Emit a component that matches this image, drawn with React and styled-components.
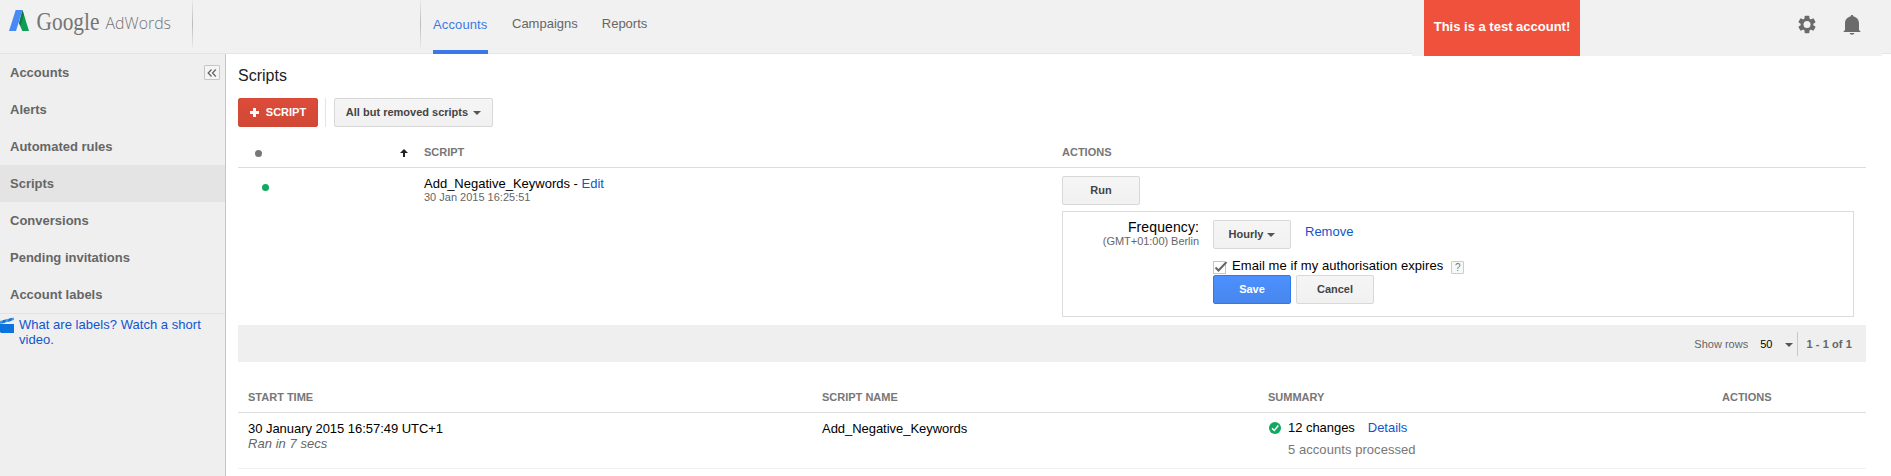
import React from 'react';
import styled, { createGlobalStyle, css } from 'styled-components';

const Global = createGlobalStyle`
  * { box-sizing: border-box; }
  html, body { margin: 0; height: 100%; overflow: hidden; }
  body { font: 13px/15px "Liberation Sans", Arial, sans-serif; color: #000; background: #fff; }
  svg { display: block; flex: none; }
`;

const Page = styled.div`
  display: flex;
  flex-direction: column;
  height: 476px;
  width: 1891px;
`;

const Header = styled.header`
  position: relative;
  display: flex;
  height: 54px;
  flex: none;
  background: #f1f1f1;
  border-bottom: 1px solid #e5e5e5;
`;

const Brand = styled.div`
  width: 192px;
  height: 53px;
`;

const HeaderRule = styled.div`
  width: 1px;
  height: 48px;
  background: linear-gradient(#eaeaea, #bbb 50%, #eaeaea);
`;

const Spacer = styled.div`
  width: ${p => p.$w}px;
  flex: none;
`;

const Tabs = styled.nav`
  display: flex;
  gap: 24px;
  margin-left: 12px;
`;

const Tab = styled.a`
  height: 54px;
  padding-top: 16px;
  color: #666;
  ${p => p.$active && css`
    width: 55px;
    padding-top: 17px;
    letter-spacing: 0.12px;
    color: #3b78e7;
    border-bottom: 4px solid #3b78e7;
  `}
`;

const AccountBar = styled.div`
  position: absolute;
  top: 0;
  right: 9px;
  width: 470px;
  height: 56px;
  display: flex;
  padding-left: 12px;
  background: #f1f1f1;
`;

const TestBadge = styled.div`
  width: 156px;
  height: 56px;
  padding-top: 19px;
  text-align: center;
  white-space: nowrap;
  font-weight: bold;
  color: #fff;
  background: #f0513c;
`;

const IconGroup = styled.div`
  display: flex;
  gap: 19px;
  padding: 12px 0 0 213.5px;
`;

const Body = styled.div`
  display: flex;
  flex: 1;
  min-height: 0;
`;

const Sidebar = styled.aside`
  width: 226px;
  flex: none;
  background: #efefef;
  border-right: 1px solid #c6c6c6;
`;

const NavItem = styled.div`
  display: flex;
  align-items: center;
  justify-content: space-between;
  height: 37px;
  padding: 0 5px 0 10px;
  font-weight: bold;
  color: #666;
  background: ${p => (p.$active ? '#e4e4e4' : 'transparent')};
`;

const Collapse = styled.button`
  display: flex;
  align-items: center;
  justify-content: center;
  width: 16px;
  height: 15px;
  padding: 0;
  border: 1px solid #c6c6c6;
  border-radius: 1px;
  background: #f5f5f5;
`;

const VideoHint = styled.div`
  display: flex;
  gap: 5px;
  padding: 3px 12px 0 0;
  border-top: 1px solid #e3e3e3;
  letter-spacing: 0.03px;
`;

const Link = styled.a`
  color: #15c;
`;

const Main = styled.main`
  flex: 1;
  padding: 13px 25px 0 12px;
`;

const Title = styled.h1`
  margin: 0;
  font-size: 16px;
  line-height: 18px;
  font-weight: normal;
  color: #222;
`;

const Toolbar = styled.div`
  display: flex;
  margin-top: 13px;
`;

const Divider = styled.div`
  width: 1px;
  margin: 0 8px 0 7px;
  background: #e5e5e5;
`;

const Button = styled.button`
  display: flex;
  align-items: center;
  justify-content: center;
  gap: ${p => p.$gap || 0}px;
  width: ${p => p.$w || 78}px;
  height: 29px;
  flex: none;
  padding: 0 0 1px;
  border: 1px solid #d8d8d8;
  border-radius: 2px;
  font: bold 11px/27px "Liberation Sans", Arial, sans-serif;
  color: #444;
  background: linear-gradient(#f5f5f5, #f1f1f1);
  ${p => p.$kind === 'create' && css`
    color: #fff;
    border-color: #d14836;
    background: linear-gradient(#dd4b39, #d14836);
  `}
  ${p => p.$kind === 'primary' && css`
    color: #fff;
    border-color: #3079ed;
    background: linear-gradient(#4d90fe, #4787ed);
  `}
`;

const Caret = styled.span`
  border: 4px solid transparent;
  border-top-color: #555;
  border-bottom: 0;
  margin-top: 2px;
`;

const ColHeads = styled.div`
  display: grid;
  grid-template-columns: ${p => p.$cols};
  height: ${p => p.$h}px;
  padding: ${p => p.$pt}px 0 0;
  border-bottom: 1px solid #ddd;
  font: bold 11px/12px "Liberation Sans", Arial, sans-serif;
  color: #777;
`;

const StatusHead = styled.div`
  display: flex;
  justify-content: space-between;
  padding: 3px 16px 0 17px;
`;

const Dot = styled.i`
  width: 7px;
  height: 7px;
  margin: ${p => p.$m || '0'};
  border-radius: 50%;
  background: ${p => p.$c};
`;

const ScriptRow = styled.div`
  display: grid;
  grid-template-columns: 186px 638px 1fr;
  height: 157px;
`;

const ScriptCell = styled.div`
  padding-top: 8px;
`;

const Stamp = styled.div`
  font-size: 11px;
  line-height: 12px;
  letter-spacing: ${p => p.$ls || 0}px;
  color: #666;
`;

const ActionCell = styled.div`
  padding: 8px 12px 0 0;
`;

const Schedule = styled.div`
  display: flex;
  height: 106px;
  margin-top: 6px;
  padding-top: 8px;
  border: 1px solid #dcdcdc;
`;

const FrequencyLabel = styled.div`
  width: 136px;
  font-size: 14px;
  line-height: 16px;
  letter-spacing: 0.1px;
  text-align: right;
  margin: -1px 14px 0 0;
  white-space: nowrap;
`;

const FreqControls = styled.div`
  display: flex;
  gap: 14px;
`;

const RemoveLink = styled(Link)`
  padding-top: 4px;
`;

const EmailRow = styled.label`
  display: flex;
  margin-top: 9px;
  height: 17px;
  letter-spacing: 0.07px;
  white-space: nowrap;
`;

const CheckBox = styled.span`
  width: 13px;
  height: 13px;
  margin: 3px 6px 0 0;
  border: 1px solid #c6c6c6;
`;

const Help = styled.span`
  width: 13px;
  height: 13px;
  margin: 3px 0 0 8px;
  border: 1px solid #ccc;
  border-radius: 1px;
  background: #f8f8f8;
  font: 10px/12px "Liberation Sans", Arial, sans-serif;
  text-align: center;
  color: #777;
`;

const ButtonPair = styled.div`
  display: flex;
  gap: 5px;
`;

const Pager = styled.div`
  display: flex;
  align-items: center;
  justify-content: flex-end;
  height: 37px;
  padding-right: 14px;
  background: #efefef;
  font-size: 11px;
  line-height: 12px;
  color: #666;
`;

const RowCount = styled.span`
  margin: 0 13px 0 12px;
  color: #000;
`;

const PagerRule = styled.i`
  width: 1px;
  height: 24px;
  margin: 0 8px 0 4px;
  background: #c8c8c8;
`;

const Range = styled.b`
  letter-spacing: 0.1px;
`;

const LogRow = styled.div`
  display: grid;
  grid-template-columns: ${p => p.$cols};
  height: 56px;
  padding-top: 8px;
  border-bottom: 1px solid #f0f0f0;
  letter-spacing: -0.04px;
`;

const LogCell = styled.div`
  padding-left: 10px;
`;

const Duration = styled.div`
  font-style: italic;
  letter-spacing: 0.05px;
  color: #666;
`;

const Summary = styled.div`
  display: flex;
  margin-top: -1px;
  gap: 7px;
`;

const Details = styled(Link)`
  margin-left: 13px;
`;

const Processed = styled.div`
  margin-top: 7px;
  letter-spacing: 0.06px;
  color: #777;
`;

const LOG_COLS = '574px 446px 454px 1fr';
const NAV = ['Accounts', 'Alerts', 'Automated rules', 'Scripts', 'Conversions', 'Pending invitations', 'Account labels'];

const Logo = () => (
  <svg width="192" height="53" viewBox="0 0 192 53">
    <path d="M22.5 10L19 23L22.3 31H29Z" fill="#109d58" />
    <path d="M22.5 10L19 23L20.500 26.500L23.800 14.500Z" fill="#0b8043" />
    <path d="M15.7 10H22.5L16 31H9Z" fill="#4889f6" />
    <text x="36.5" y="30" fontFamily="Liberation Serif, serif" fontSize="24.500" fill="#757575" textLength="63" lengthAdjust="spacingAndGlyphs">Google</text>
    <text x="105.5" y="29" fontFamily="Open Sans, sans-serif" fontWeight="300" fontSize="17" fill="#757575" textLength="65.5" lengthAdjust="spacingAndGlyphs">AdWords</text>
  </svg>
);

const Gear = () => (
  <svg width="26" height="25" viewBox="-13 -12.5 26 25">
    <g fill="#6b6b6b">
      {[0, 60, 120].map(a => (
        <rect key={a} x="-2.4" y="-8.7" width="4.8" height="17.4" rx="0.8" transform={`rotate(${a})`} />
      ))}
    </g>
    <circle r="4.9" fill="none" stroke="#6b6b6b" strokeWidth="3" />
    <circle r="3.5" fill="#f1f1f1" />
  </svg>
);

const Bell = () => (
  <svg width="26" height="26" viewBox="0 0 26 26">
    <path d="M13 3c1 0 1.4.7 1.4 1.6C18 5.300 20 8 20 11.500V18L21.500 19.500V20H4.500V19.500L6 18V11.500C6 8 8 5.300 11.600 4.600C11.600 3.700 12 3 13 3Z" fill="#6b6b6b" />
    <path d="M10.700 21H15.300C15.300 23.300 10.700 23.300 10.700 21Z" fill="#6b6b6b" />
  </svg>
);

const Clapper = () => (
  <svg width="14" height="17" viewBox="0 0 14 17">
    <path d="M0 4L13.500 0.500L14 3L0 7Z" fill="#3b97ee" />
    <path d="M3 3.200L6 2.400L5 5.600L2 6.400ZM9 1.700L12 .9L11 3.900L8 4.700Z" fill="#1a6fd0" />
    <path d="M0 7H14V16H1L0 15Z" fill="#0b73e0" />
  </svg>
);

export default function App() {
  return (
    <Page>
      <Global />
      <Header>
        <Brand><Logo /></Brand>
        <HeaderRule />
        <Spacer $w={227} />
        <HeaderRule />
        <Tabs>
          <Tab $active>Accounts</Tab>
          <Tab>Campaigns</Tab>
          <Tab>Reports</Tab>
        </Tabs>
        <AccountBar>
          <TestBadge>This is a test account!</TestBadge>
          <IconGroup><Gear /><Bell /></IconGroup>
        </AccountBar>
      </Header>
      <Body>
        <Sidebar>
          {NAV.map((name, i) => (
            <NavItem key={name} $active={name === 'Scripts'}>
              {name}
              {i === 0 && (
                <Collapse aria-label="Collapse">
                  <svg width="10" height="8" viewBox="0 0 10 8" fill="none" stroke="#666" strokeWidth="1.300">
                    <path d="M4.500 .5L1.200 4L4.500 7.500M8.800 .5L5.500 4L8.800 7.500" />
                  </svg>
                </Collapse>
              )}
            </NavItem>
          ))}
          <VideoHint>
            <Clapper />
            <Link>What are labels? Watch a short video.</Link>
          </VideoHint>
        </Sidebar>
        <Main>
          <Title>Scripts</Title>
          <Toolbar>
            <Button $kind="create" $w={80} $gap={7}>
              <svg width="9" height="9" viewBox="0 0 9 9"><path d="M3 0H6V3H9V6H6V9H3V6H0V3H3Z" fill="#fff" /></svg>
              SCRIPT
            </Button>
            <Divider />
            <Button $w={159} $gap={5}>All but removed scripts<Caret /></Button>
          </Toolbar>
          <ColHeads $cols="186px 638px 1fr" $h={41} $pt={19}>
            <StatusHead>
              <Dot $c="#777" $m="1px 0 0" />
              <svg width="8" height="8" viewBox="0 0 8 8"><path d="M4 0L8 4H5V8H3V4H0Z" fill="#222" /></svg>
            </StatusHead>
            <div>SCRIPT</div>
            <div>ACTIONS</div>
          </ColHeads>
          <ScriptRow>
            <Dot $c="#0fa95f" $m="16px 0 0 24px" />
            <ScriptCell>
              Add_Negative_Keywords - <Link>Edit</Link>
              <Stamp>30 Jan 2015 16:25:51</Stamp>
            </ScriptCell>
            <ActionCell>
              <Button>Run</Button>
              <Schedule>
                <FrequencyLabel>
                  Frequency:
                  <Stamp $ls={-0.04}>(GMT+01:00) Berlin</Stamp>
                </FrequencyLabel>
                <div>
                  <FreqControls>
                    <Button $gap={4}>Hourly<Caret /></Button>
                    <RemoveLink>Remove</RemoveLink>
                  </FreqControls>
                  <EmailRow>
                    <CheckBox>
                      <svg width="14" height="12" viewBox="0 0 14 12" fill="none" stroke="#666" strokeWidth="2"><path d="M1.500 5.500L4.500 8.500L12.500 0" /></svg>
                    </CheckBox>
                    Email me if my authorisation expires
                    <Help>?</Help>
                  </EmailRow>
                  <ButtonPair>
                    <Button $kind="primary">Save</Button>
                    <Button>Cancel</Button>
                  </ButtonPair>
                </div>
              </Schedule>
            </ActionCell>
          </ScriptRow>
          <Pager>
            Show rows
            <RowCount>50</RowCount>
            <Caret />
            <PagerRule />
            <Range>1 - 1 of 1</Range>
          </Pager>
          <ColHeads $cols={LOG_COLS} $h={51} $pt={29}>
            <LogCell>START TIME</LogCell>
            <LogCell>SCRIPT NAME</LogCell>
            <LogCell>SUMMARY</LogCell>
            <LogCell>ACTIONS</LogCell>
          </ColHeads>
          <LogRow $cols={LOG_COLS}>
            <LogCell>
              30 January 2015 16:57:49 UTC+1
              <Duration>Ran in 7 secs</Duration>
            </LogCell>
            <LogCell>Add_Negative_Keywords</LogCell>
            <LogCell>
              <Summary>
                <svg width="13" height="15" viewBox="0 0 13 15">
                  <circle cx="7" cy="8" r="6" fill="#0fa95f" />
                  <path d="M4 8.200L6.300 10.500L10.300 5.500" fill="none" stroke="#fff" strokeWidth="1.500" />
                </svg>
                <div>
                  12 changes<Details>Details</Details>
                  <Processed>5 accounts processed</Processed>
                </div>
              </Summary>
            </LogCell>
          </LogRow>
        </Main>
      </Body>
    </Page>
  );
}
